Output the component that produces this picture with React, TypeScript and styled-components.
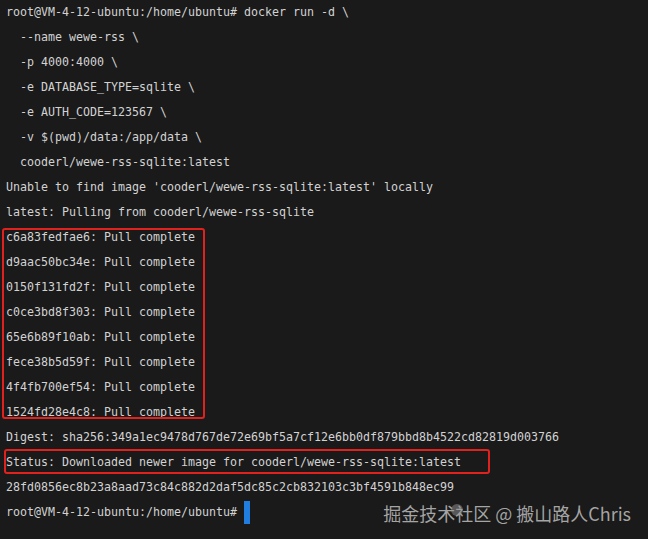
import React from "react";
import styled, { createGlobalStyle } from "styled-components";

const Global = createGlobalStyle`
  html, body { margin: 0; padding: 0; background: #1a1a1a; }
  body { width: 648px; height: 539px; overflow: hidden; }
`;

const Terminal = styled.div`
  position: relative;
  width: 648px;
  height: 539px;
  box-sizing: border-box;
  padding: 0 6px;
  background: #1a1a1a;
  color: #d2d2d2;
  font-family: "DejaVu Sans Mono", "Liberation Mono", monospace;
  font-size: 11.63px;
  display: flex;
  flex-direction: column;
`;

const Line = styled.div<{ $indent?: boolean }>`
  height: 25px;
  line-height: 25px;
  white-space: pre;
  padding-left: ${(p) => (p.$indent ? "14px" : "0")};
  display: flex;
  align-items: center;
`;

const Highlight = styled.div<{ $top: number; $bottom: number; $left: number; $right: number }>`
  position: relative;
  &::after {
    content: "";
    position: absolute;
    top: ${(p) => p.$top}px;
    bottom: ${(p) => p.$bottom}px;
    left: ${(p) => p.$left}px;
    right: ${(p) => p.$right}px;
    border: 2px solid #e0221f;
    border-radius: 3px;
    pointer-events: none;
  }
`;

const Cursor = styled.span`
  display: inline-block;
  width: 6px;
  height: 23px;
  margin-left: 7px;
  background: #1f7ee0;
`;

const Watermark = styled.div`
  position: absolute;
  right: 17px;
  top: 502px;
  height: 22px;
  font-family: "Noto Sans CJK SC", "Noto Sans", sans-serif;
  font-size: 18px;
  line-height: 22px;
  color: rgba(205, 205, 205, 0.78);
  white-space: pre;
`;

const WatermarkText = styled.span`
  position: relative;
  display: inline-block;
`;

const Logo = styled.svg`
  position: absolute;
  left: 66px;
  top: 0px;
`;

const pulls = [
  "c6a83fedfae6",
  "d9aac50bc34e",
  "0150f131fd2f",
  "c0ce3bd8f303",
  "65e6b89f10ab",
  "fece38b5d59f",
  "4f4fb700ef54",
  "1524fd28e4c8",
];

export default function App() {
  return (
    <>
      <Global />
      <Terminal>
        <Line>root@VM-4-12-ubuntu:/home/ubuntu# docker run -d \</Line>
        <Line $indent>--name wewe-rss \</Line>
        <Line $indent>-p 4000:4000 \</Line>
        <Line $indent>-e DATABASE_TYPE=sqlite \</Line>
        <Line $indent>-e AUTH_CODE=123567 \</Line>
        <Line $indent>-v $(pwd)/data:/app/data \</Line>
        <Line $indent>cooderl/wewe-rss-sqlite:latest</Line>
        <Line>Unable to find image 'cooderl/wewe-rss-sqlite:latest' locally</Line>
        <Line>latest: Pulling from cooderl/wewe-rss-sqlite</Line>
        <Highlight $top={3} $bottom={6} $left={-4} $right={437}>
          {pulls.map((h) => (
            <Line key={h}>{h}: Pull complete</Line>
          ))}
        </Highlight>
        <Line>Digest: sha256:349a1ec9478d767de72e69bf5a7cf12e6bb0df879bbd8b4522cd82819d003766</Line>
        <Highlight $top={-1} $bottom={1} $left={-2} $right={152}>
          <Line>Status: Downloaded newer image for cooderl/wewe-rss-sqlite:latest</Line>
        </Highlight>
        <Line>28fd0856ec8b23a8aad73c84c882d2daf5dc85c2cb832103c3bf4591b848ec99</Line>
        <Line>
          root@VM-4-12-ubuntu:/home/ubuntu#
          <Cursor />
        </Line>
        <Watermark>
          <WatermarkText>
            掘金技术社区 @ 搬山路人Chris
            <Logo width="16" height="16" viewBox="0 0 16 16">
              <circle cx="8" cy="8" r="6" fill="rgba(150,150,150,0.5)" />
            </Logo>
          </WatermarkText>
        </Watermark>
      </Terminal>
    </>
  );
}
